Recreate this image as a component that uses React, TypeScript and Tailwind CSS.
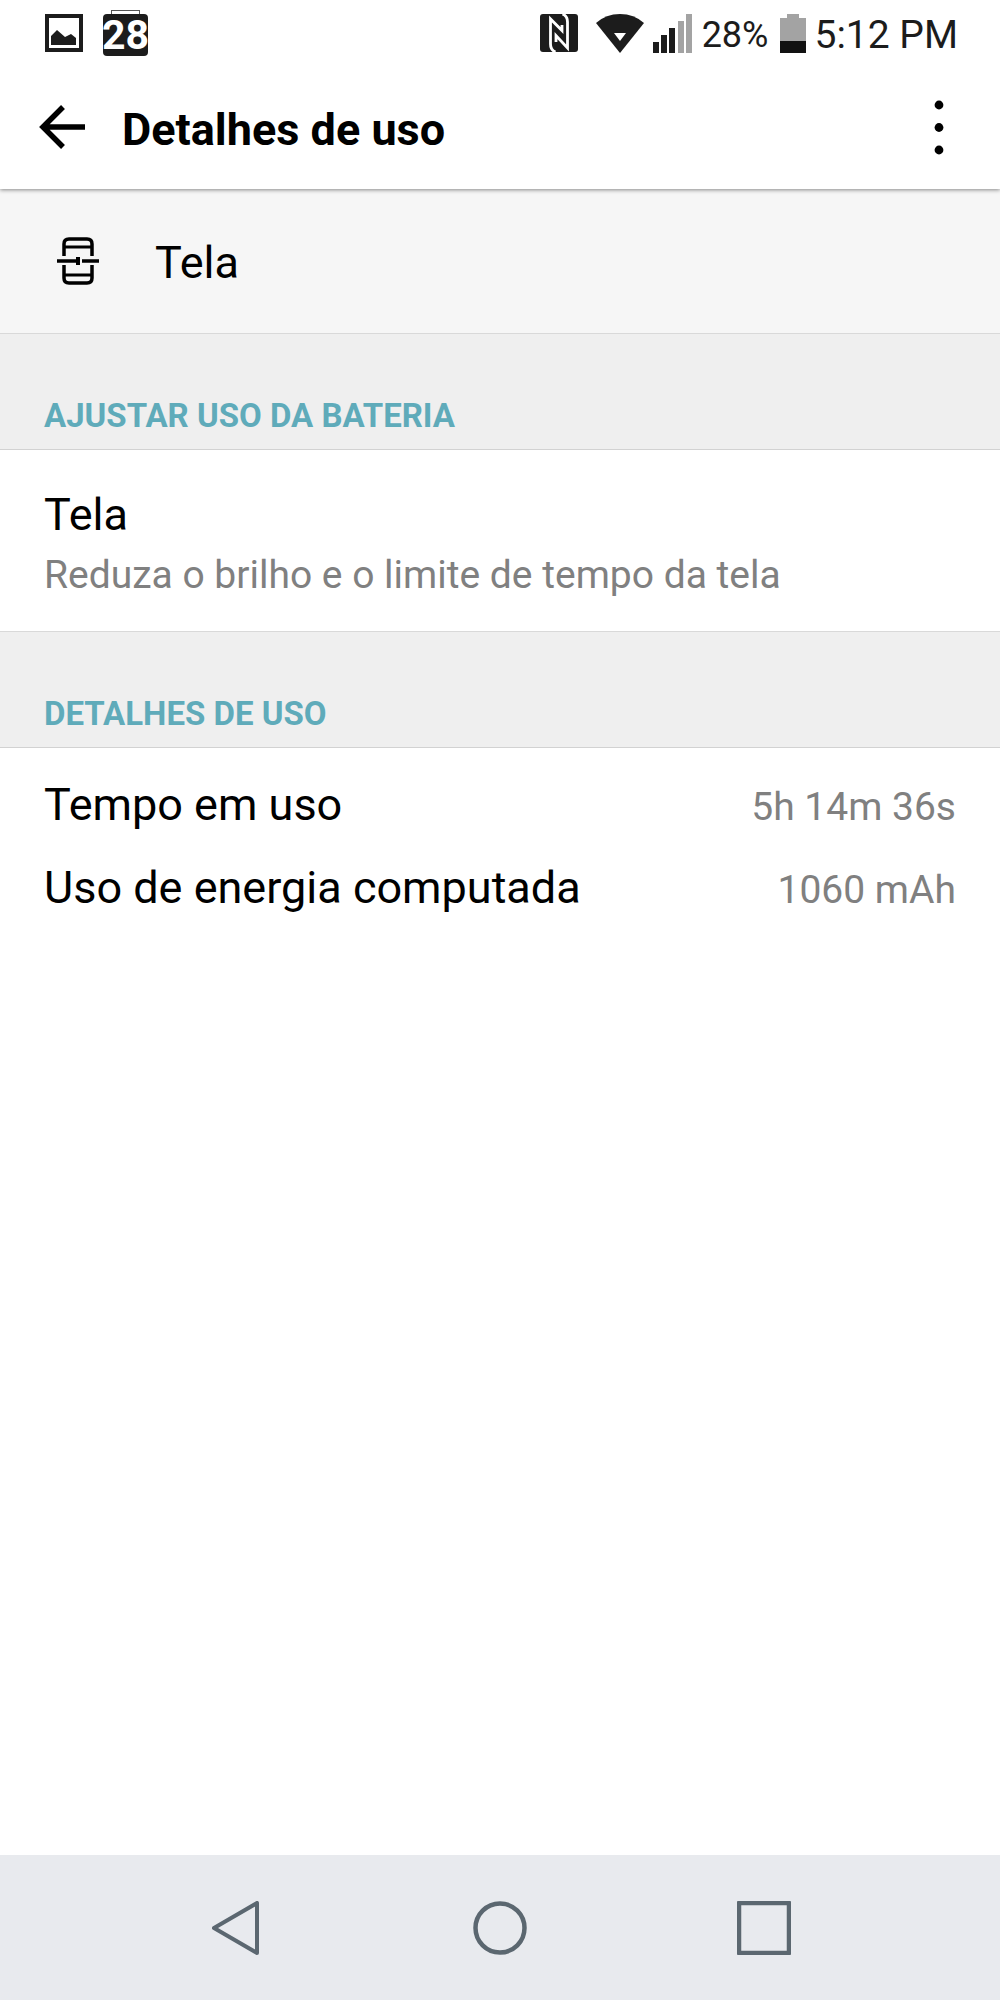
import React from "react";

const usage = [
  { label: "Tempo em uso", value: "5h 14m 36s" },
  { label: "Uso de energia computada", value: "1060 mAh" },
];

const GalleryIcon = () => (
  <svg className="w-[38px] h-[38px]" viewBox="0 0 38 38" aria-hidden="true">
    <path fill="#1c1c1c" fillRule="evenodd" d="M0 0h38v38H0zM4 4v30h30V4z" />
    <path fill="#1c1c1c" d="M6 31V22l6-6 8 7 6-3 5 4v7z" />
  </svg>
);

const NfcIcon = () => (
  <svg className="w-[38px] h-[38px]" viewBox="0 0 38 38" aria-hidden="true">
    <rect width="38" height="38" rx="3" fill="#1c1c1c" />
    <path d="M15.500 38Q10.500 36 10.500 30V5L22 16.500V11" fill="none" stroke="#fff" strokeWidth="2.800" />
    <path d="M22.500 0Q27.500 2 27.500 8V34L16 21.500V28" fill="none" stroke="#fff" strokeWidth="2.800" />
  </svg>
);

const WifiIcon = () => (
  <svg className="w-12 h-[39px]" viewBox="0 0 48 39" aria-hidden="true">
    <path fill="#1c1c1c" d="M0 9Q10 0 24 0t24 9L24 39z" />
    <path fill="#fff" d="M18 19h12l-6 8z" />
  </svg>
);

const SignalIcon = () => (
  <svg className="w-10 h-[39px]" viewBox="0 0 40 39" aria-hidden="true">
    <g fill="#1c1c1c">
      <rect x="0" y="28" width="6" height="11" />
      <rect x="8" y="21" width="6" height="18" />
      <rect x="16" y="14" width="6" height="25" />
    </g>
    <g fill="#a3a3a3">
      <rect x="25" y="7" width="6" height="32" />
      <rect x="33" y="0" width="6" height="39" />
    </g>
  </svg>
);

const BatteryIcon = () => (
  <svg className="w-[26px] h-[39px]" viewBox="0 0 26 39" aria-hidden="true">
    <path fill="#a3a3a3" d="M7 0h12v4h7v24H0V4h7z" />
    <rect y="27" width="26" height="12" fill="#111" />
  </svg>
);

const ScreenIcon = () => (
  <svg className="w-[42px] h-12" viewBox="0 0 42 48" fill="none" stroke="#000" aria-hidden="true">
    <path strokeWidth="3.500" d="M7 19V7Q7 2 12 2H30Q35 2 35 7V19M7 28V41Q7 46 12 46H30Q35 46 35 41V28" />
    <path strokeWidth="3" d="M7 10H35M7 38H35" />
    <path strokeWidth="3.500" d="M0 24H21M25 24H42" />
    <path strokeWidth="4" d="M21 20V28" />
  </svg>
);

const SectionTitle = ({ children }: { children: React.ReactNode }) => (
  <h2 className="h-[116px] flex items-end px-11 pb-[13px] bg-[#efefef] border-b border-[#d2d2d2] text-[33px] leading-10 font-bold text-[#5fabba]">
    {children}
  </h2>
);

const App = () => {
  return (
    <div className="flex flex-col min-h-screen bg-white text-black font-['Roboto',sans-serif]">
      <div className="relative shadow-[0_1px_4px_rgba(0,0,0,0.45)]">
        <div className="flex items-center justify-between h-[66px] pl-[45px] pr-[42px] text-[#1c1c1c]">
          <div className="flex items-center gap-5">
            <GalleryIcon />
            <div className="relative w-[45px] h-[42px] mt-1 rounded-sm bg-[#1c1c1c] flex items-center justify-center">
              <span className="absolute -top-1 left-2 w-[29px] h-1 border border-b-0 border-[#555]" />
              <span className="text-[41px] leading-10 font-bold text-white">28</span>
            </div>
          </div>
          <div className="flex items-center">
            <NfcIcon />
            <span className="ml-[18px]"><WifiIcon /></span>
            <span className="ml-[9px]"><SignalIcon /></span>
            <span className="ml-[9px] pt-1 text-[36px] leading-10">28%</span>
            <span className="ml-3"><BatteryIcon /></span>
            <span className="ml-2 pt-1 text-[39px] leading-10">5:12 PM</span>
          </div>
        </div>

        <header className="flex items-center h-[123px] pl-[39px] pr-8">
          <button type="button" aria-label="Voltar">
            <svg className="w-[46px] h-[46px]" viewBox="0 0 46 46" fill="none" stroke="#000" strokeWidth="5.500">
              <path d="M46 22H4M24 2 4 22 24 42" />
            </svg>
          </button>
          <h1 className="ml-[37px] pt-1 text-[45px] leading-[56px] font-bold">Detalhes de uso</h1>
          <button type="button" aria-label="Mais opções" className="ml-auto w-[58px] flex justify-center">
            <svg className="w-[10px] h-14" viewBox="0 0 10 56">
              <circle cx="5" cy="5" r="4.400" />
              <circle cx="5" cy="27.500" r="4.400" />
              <circle cx="5" cy="50" r="4.400" />
            </svg>
          </button>
        </header>
      </div>

      <main className="flex-1">
        <div className="flex items-center h-[145px] pl-[57px] bg-[#f6f6f6] border-b border-[#d9d9d9]">
          <ScreenIcon />
          <span className="ml-14 pt-1 text-[45px] leading-[56px]">Tela</span>
        </div>

        <SectionTitle>AJUSTAR USO DA BATERIA</SectionTitle>
        <button type="button" className="flex flex-col gap-1 w-full px-11 pt-[37px] pb-7 border-b border-[#d9d9d9] text-left">
          <span className="text-[45px] leading-[56px]">Tela</span>
          <span className="text-[39px] leading-[56px] text-[#808080]">Reduza o brilho e o limite de tempo da tela</span>
        </button>

        <SectionTitle>DETALHES DE USO</SectionTitle>
        <dl className="pt-[15px]">
          {usage.map((item) => (
            <div key={item.label} className="flex items-baseline justify-between h-[83px] px-11">
              <dt className="text-[45px] leading-[83px]">{item.label}</dt>
              <dd className="text-[39px] text-[#808080]">{item.value}</dd>
            </div>
          ))}
        </dl>
      </main>

      <nav className="grid grid-cols-3 items-center h-[145px] px-26 bg-[#e8eaee]">
        <button type="button" aria-label="Voltar" className="flex justify-center">
          <svg className="w-12 h-[54px]" viewBox="0 0 48 54" fill="none" stroke="#5b6770" strokeWidth="4" strokeLinejoin="round">
            <path d="M45 2V52L2 27z" />
          </svg>
        </button>
        <button type="button" aria-label="Início" className="flex justify-center">
          <svg className="w-[54px] h-[54px]" viewBox="0 0 54 54" fill="none" stroke="#5b6770" strokeWidth="4.500">
            <circle cx="27" cy="27" r="24.500" />
          </svg>
        </button>
        <button type="button" aria-label="Recentes" className="flex justify-center">
          <svg className="w-[54px] h-[54px]" viewBox="0 0 54 54" fill="none" stroke="#5b6770" strokeWidth="4.500" strokeLinejoin="round">
            <rect x="2" y="2" width="50" height="50" />
          </svg>
        </button>
      </nav>
    </div>
  );
};

export default App;
